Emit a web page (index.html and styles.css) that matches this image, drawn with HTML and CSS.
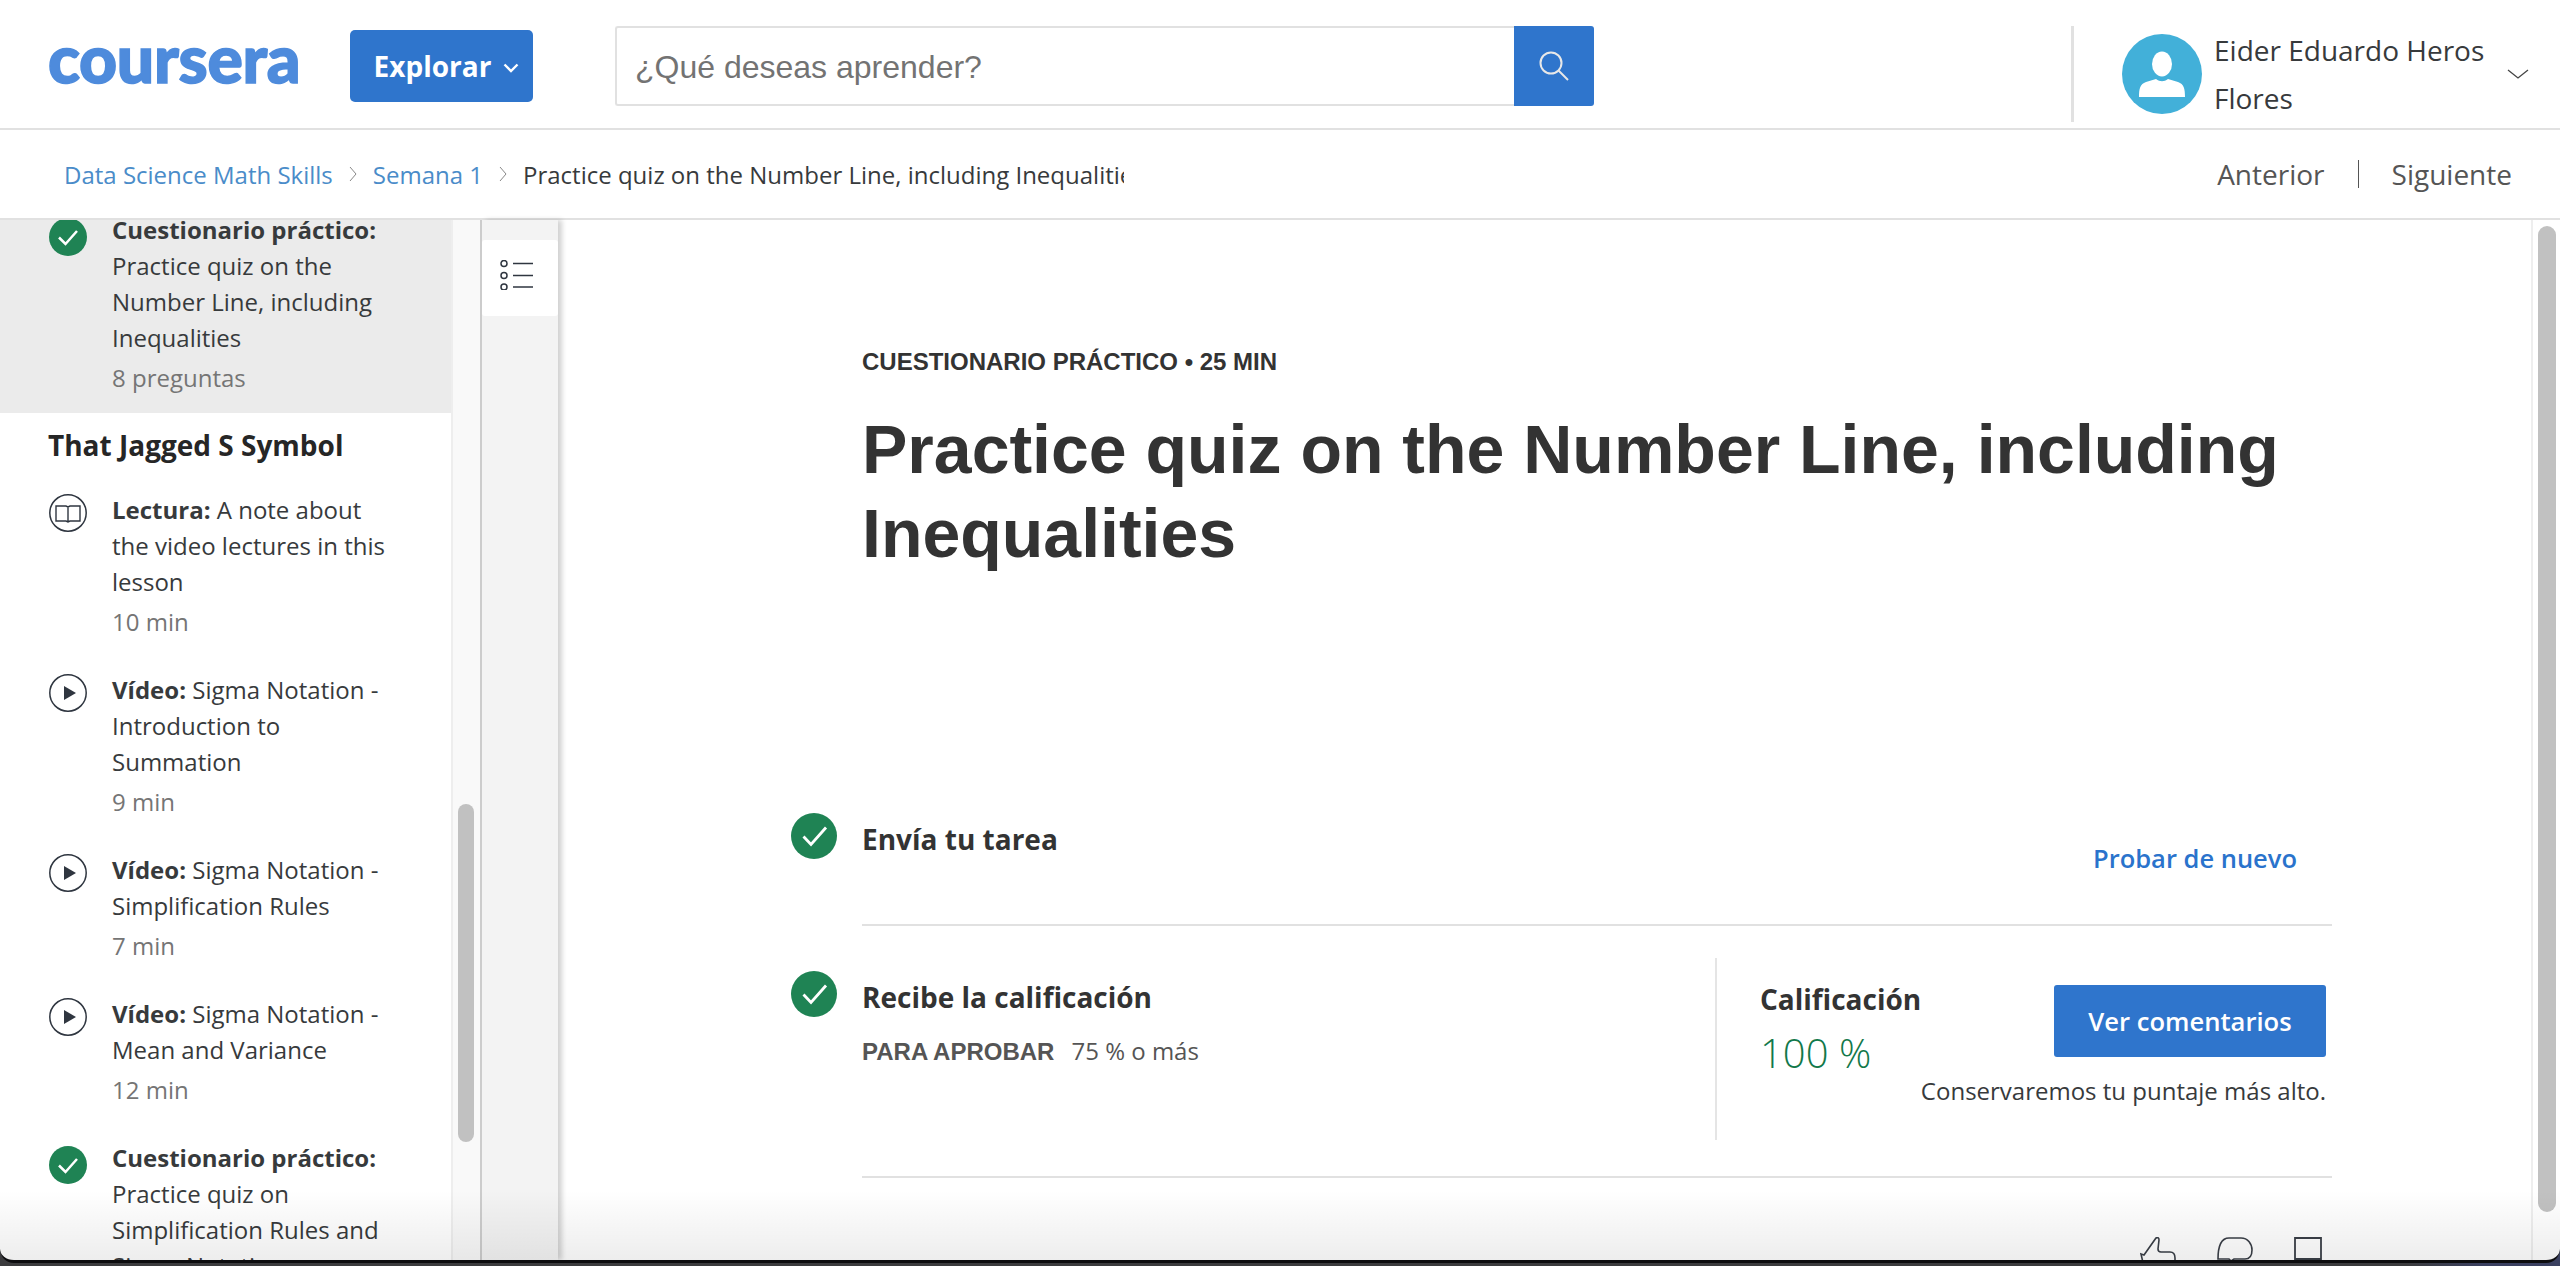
FILE: index.html
```html
<!DOCTYPE html>
<html lang="es">
<head>
  <meta charset="UTF-8">
  <title>Practice quiz on the Number Line, including Inequalities | Coursera</title>
  <link rel="stylesheet" href="styles.css">
</head>
<body>
  <div class="window">
    <header class="topbar">
      <span class="logo">coursera</span>
      <button class="explore-btn">Explorar
        <svg class="explore-chevron" viewBox="0 0 16 10"><path d="M1.500 1.500 8 8l6.500-6.500" fill="none" stroke="#fff" stroke-width="2.400"/></svg>
      </button>
      <div class="search">
        <div class="search-input">¿Qué deseas aprender?</div>
        <div class="search-btn">
          <svg viewBox="0 0 32 32" width="32" height="32"><circle cx="13" cy="13" r="10.500" fill="none" stroke="#e8e8e8" stroke-width="2"/><path d="M20.500 20.500 30 30" stroke="#e8e8e8" stroke-width="2"/></svg>
        </div>
      </div>
      <div class="user">
        <div class="avatar">
          <svg viewBox="0 0 80 80" width="80" height="80"><ellipse cx="40" cy="30" rx="10" ry="12.500" fill="#fff"/><path d="M17 63c0-8 1-13 7-15l10-3c4 3 8 3 12 0l10 3c6 2 7 7 7 15z" fill="#fff"/></svg>
        </div>
        <div class="user-name">Eider Eduardo Heros Flores</div>
        <svg class="user-chevron" viewBox="0 0 22 10" width="22" height="10"><path d="M1 1l10 8 10-8" fill="none" stroke="#444" stroke-width="1.300"/></svg>
      </div>
    </header>

    <nav class="crumbbar">
      <div class="crumbs">
        <a class="crumb-link">Data Science Math Skills</a>
        <svg class="crumb-sep" viewBox="0 0 8 16" width="8" height="16"><path d="M1 1l6 7-6 7" fill="none" stroke="#888" stroke-width="1"/></svg>
        <a class="crumb-link">Semana 1</a>
        <svg class="crumb-sep" viewBox="0 0 8 16" width="8" height="16"><path d="M1 1l6 7-6 7" fill="none" stroke="#888" stroke-width="1"/></svg>
        <span class="crumb-current">Practice quiz on the Number Line, including Inequalities</span>
      </div>
      <div class="pager">
        <span>Anterior</span>
        <i class="pager-sep"></i>
        <span>Siguiente</span>
      </div>
    </nav>

    <div class="workspace">
      <aside class="sidebar">
        <div class="lesson-list">
          <div class="item item-active">
            <svg class="item-icon icon-done" viewBox="0 0 38 38"><circle cx="19" cy="19" r="19" fill="#1f8354"/><path d="M10 19.500l6.500 6.500L28 13" fill="none" stroke="#fff" stroke-width="2.500"/></svg>
            <div class="item-text">
              <p><b>Cuestionario práctico:</b> Practice quiz on the Number Line, including Inequalities</p>
              <p class="meta">8 preguntas</p>
            </div>
          </div>

          <h3 class="lesson-title">That Jagged S Symbol</h3>

          <div class="item">
            <svg class="item-icon" viewBox="0 0 38 38"><circle cx="19" cy="19" r="18.200" fill="none" stroke="#2f3640" stroke-width="1.500"/><path d="M7 12h10l2 1 2-1h10v15H21l-2 1-2-1H7zM19 13v15" fill="none" stroke="#2f3640" stroke-width="1.400"/></svg>
            <div class="item-text">
              <p><b>Lectura:</b> A note about the video lectures in this lesson</p>
              <p class="meta">10 min</p>
            </div>
          </div>
          <div class="item">
            <svg class="item-icon" viewBox="0 0 38 38"><circle cx="19" cy="19" r="18.200" fill="none" stroke="#2f3640" stroke-width="1.500"/><path d="M15 12v14l12-7z" fill="#2f3640"/></svg>
            <div class="item-text">
              <p><b>Vídeo:</b> Sigma Notation - Introduction to Summation</p>
              <p class="meta">9 min</p>
            </div>
          </div>
          <div class="item">
            <svg class="item-icon" viewBox="0 0 38 38"><circle cx="19" cy="19" r="18.200" fill="none" stroke="#2f3640" stroke-width="1.500"/><path d="M15 12v14l12-7z" fill="#2f3640"/></svg>
            <div class="item-text">
              <p><b>Vídeo:</b> Sigma Notation - Simplification Rules</p>
              <p class="meta">7 min</p>
            </div>
          </div>
          <div class="item">
            <svg class="item-icon" viewBox="0 0 38 38"><circle cx="19" cy="19" r="18.200" fill="none" stroke="#2f3640" stroke-width="1.500"/><path d="M15 12v14l12-7z" fill="#2f3640"/></svg>
            <div class="item-text">
              <p><b>Vídeo:</b> Sigma Notation - Mean and Variance</p>
              <p class="meta">12 min</p>
            </div>
          </div>
          <div class="item">
            <svg class="item-icon icon-done" viewBox="0 0 38 38"><circle cx="19" cy="19" r="19" fill="#1f8354"/><path d="M10 19.500l6.500 6.500L28 13" fill="none" stroke="#fff" stroke-width="2.500"/></svg>
            <div class="item-text">
              <p><b>Cuestionario práctico:</b> Practice quiz on Simplification Rules and Sigma Notation</p>
            </div>
          </div>
        </div>
      </aside>

      <div class="side-track"><div class="side-thumb"></div></div>

      <div class="side-toggle">
        <div class="toggle-tab">
          <svg viewBox="0 0 33 30" width="33" height="30"><g fill="none" stroke="#2f3640" stroke-width="1.500"><circle cx="4" cy="3.500" r="3"/><circle cx="4" cy="15.500" r="3"/><circle cx="4" cy="27" r="3"/><path d="M13 3.500h20M13 15.500h20M13 27h20"/></g></svg>
        </div>
      </div>

      <main class="content">
        <div class="content-inner">
          <div class="eyebrow">CUESTIONARIO PRÁCTICO • 25 MIN</div>
          <h1 class="quiz-title">Practice quiz on the Number Line, including Inequalities</h1>

          <section class="step step-submit">
            <svg class="step-icon" viewBox="0 0 46 46"><circle cx="23" cy="23" r="23" fill="#1f8354"/><path d="M12.500 23.500l7.500 8L35 14.500" fill="none" stroke="#fff" stroke-width="2.800"/></svg>
            <div class="step-body">
              <h4 class="step-title">Envía tu tarea</h4>
              <a class="retry-link">Probar de nuevo</a>
            </div>
          </section>

          <section class="step step-grade">
            <svg class="step-icon" viewBox="0 0 46 46"><circle cx="23" cy="23" r="23" fill="#1f8354"/><path d="M12.500 23.500l7.500 8L35 14.500" fill="none" stroke="#fff" stroke-width="2.800"/></svg>
            <div class="step-body">
              <div class="grade-info">
                <h4 class="step-title">Recibe la calificación</h4>
                <p class="pass-line"><b>PARA APROBAR</b><span>75 % o más</span></p>
              </div>
              <div class="grade-result">
                <div class="grade-top">
                  <div>
                    <h4 class="step-title">Calificación</h4>
                    <div class="grade-score">100 %</div>
                  </div>
                  <button class="feedback-btn">Ver comentarios</button>
                </div>
                <p class="grade-note">Conservaremos tu puntaje más alto.</p>
              </div>
            </div>
          </section>

          <div class="actions">
            <svg viewBox="0 0 36 30" width="36" height="30"><path d="M1 17l3 1L16 1c2-1 3 0 3 2l-1 9c0 2 1 3 3 3h9c3 0 5 2 5 6v9H4z" fill="none" stroke="#3a3f47" stroke-width="1.600"/></svg>
            <svg viewBox="0 0 36 30" width="36" height="30"><path d="M12 1h12c7 0 11 6 11 12 0 5-2 9-7 9H17l-3 2-2-2H1C1 10 4 1 12 1z" fill="none" stroke="#3a3f47" stroke-width="1.600"/></svg>
            <svg viewBox="0 0 28 30" width="28" height="30"><path d="M1 30V1h26v21H1" fill="none" stroke="#3a3f47" stroke-width="1.800"/></svg>
          </div>
        </div>
      </main>

      <div class="main-track"><div class="main-thumb"></div></div>
    </div>

    <div class="bottom-fade"></div>
  </div>
</body>
</html>
```

FILE: styles.css
```css
* {
  box-sizing: border-box;
}

body {
  margin: 0;
  height: 1266px;
  overflow: hidden;
  background: linear-gradient(90deg, #3b3b3d 0%, #3b3b3d 94%, #3a4060 97%, #3a4060 100%);
  font-family: "Open Sans", sans-serif;
  color: #373a3c;
}

p, h1, h3, h4 {
  margin: 0;
}

.window {
  position: relative;
  height: 1263px;
  background: #fff;
  border-bottom: 3px solid #0c0c0e;
  border-radius: 0 0 14px 14px;
  overflow: hidden;
  display: flex;
  flex-direction: column;
}

/* top bar */
.topbar {
  height: 130px;
  flex: none;
  display: flex;
  align-items: flex-start;
  border-bottom: 2px solid #e1e1e1;
  padding-left: 48px;
}

.logo {
  width: 256px;
  margin-top: 20px;
  font-family: Lato, sans-serif;
  font-weight: 900;
  font-size: 66px;
  line-height: 76px;
  letter-spacing: -0.300px;
  -webkit-text-stroke: 1.500px #4e8bdc;
  color: #4e8bdc;
}

.explore-btn {
  width: 183px;
  height: 72px;
  margin: 30px 0 0 46px;
  padding: 0 0 0 10px;
  background: #2f75cc;
  color: #fff;
  border: none;
  border-radius: 5px;
  font-family: "Open Sans", sans-serif;
  font-weight: 700;
  font-size: 28px;
  display: flex;
  align-items: center;
  justify-content: center;
  gap: 12px;
}

.explore-chevron {
  width: 16px;
  height: 10px;
  margin-top: 4px;
}

.search {
  display: flex;
  margin: 26px 0 0 82px;
  height: 80px;
  width: 979px;
}

.search-input {
  flex: 1;
  border: 2px solid #e1e1e1;
  border-right: none;
  border-radius: 3px 0 0 3px;
  padding-left: 18px;
  line-height: 78px;
  font-family: "Liberation Sans", sans-serif;
  font-size: 32px;
  color: #737373;
}

.search-btn {
  width: 80px;
  background: #2f75cc;
  border-radius: 0 3px 3px 0;
  display: flex;
  align-items: center;
  justify-content: center;
}

.user {
  width: 488px;
  height: 96px;
  margin: 26px 0 0 477px;
  border-left: 3px solid #e1e1e1;
  display: flex;
  align-items: center;
  flex: none;
}

.avatar {
  width: 80px;
  height: 80px;
  margin-left: 48px;
  border-radius: 50%;
  background: #42b0d9;
  flex: none;
}

.user-name {
  width: 285px;
  margin-left: 12px;
  font-size: 28px;
  line-height: 48px;
}

.user-chevron {
  margin-left: 8px;
}

/* breadcrumb row */
.crumbbar {
  height: 90px;
  flex: none;
  display: flex;
  justify-content: space-between;
  align-items: center;
  border-bottom: 2px solid #e1e1e1;
  padding: 0 48px 0 64px;
}

.crumbs {
  width: 1060px;
  display: flex;
  align-items: center;
  gap: 16px;
  font-size: 24px;
  white-space: nowrap;
  overflow: hidden;
}

.crumb-link {
  color: #4a8cc9;
}

.crumb-sep {
  flex: none;
}

.crumb-current {
  color: #373a3c;
}

.pager {
  display: flex;
  align-items: center;
  gap: 33px;
  font-size: 28px;
  color: #555;
}

.pager-sep {
  width: 1px;
  height: 28px;
  background: #555;
}

/* body of the player */
.workspace {
  flex: 1;
  min-height: 0;
  display: flex;
}

.sidebar {
  width: 451px;
  flex: none;
  overflow: hidden;
}

.lesson-list {
  margin-top: -24px;
}

.item {
  display: flex;
  gap: 25px;
  padding: 16px 0 16px 49px;
  font-size: 24px;
  line-height: 36px;
}

.item-active {
  padding-bottom: 17px;
  background: #ebebeb;
}

.item-icon {
  width: 38px;
  height: 38px;
  flex: none;
  margin-top: 2px;
}

.icon-done {
  margin-top: 6px;
}

.item-text {
  width: 281px;
}

.meta {
  margin-top: 4px;
  color: #757575;
}

.lesson-title {
  margin: 12px 0 11px 48px;
  font-size: 28px;
  line-height: 40px;
  font-weight: 700;
  color: #262626;
}

.side-track {
  position: relative;
  width: 31px;
  flex: none;
  background: #f9f9f9;
  border-left: 2px solid #eee;
  border-right: 2px solid #ccc;
}

.side-thumb {
  position: absolute;
  left: 5px;
  top: 584px;
  width: 16px;
  height: 338px;
  border-radius: 8px;
  background: #c1c1c1;
}

.side-toggle {
  width: 76px;
  flex: none;
  padding-top: 20px;
  background: #f3f3f3;
  box-shadow: 4px 0 5px rgba(0, 0, 0, 0.18);
}

.toggle-tab {
  height: 76px;
  background: #fff;
  border-radius: 3px;
  display: flex;
  align-items: center;
  justify-content: center;
  padding: 0 8px 6px 0;
}

.content {
  flex: 1;
  overflow: hidden;
}

.content-inner {
  width: 1541px;
  margin-left: 233px;
  padding-top: 128px;
}

.eyebrow {
  margin-left: 71px;
  font-family: "Liberation Sans", sans-serif;
  font-weight: 700;
  font-size: 24px;
  line-height: 28px;
  color: #333;
}

.quiz-title {
  margin: 31px 0 0 71px;
  width: 1440px;
  font-family: "Liberation Sans", sans-serif;
  font-weight: 700;
  font-size: 68px;
  line-height: 84px;
  color: #333;
}

.step {
  display: flex;
  gap: 25px;
}

.step-icon {
  width: 46px;
  height: 46px;
  flex: none;
}

.step-body {
  flex: 1;
  display: flex;
  justify-content: space-between;
  border-bottom: 2px solid #e1e1e1;
}

.step-submit {
  margin-top: 238px;
}

.step-submit .step-body {
  height: 113px;
}

.step-title {
  font-size: 28px;
  line-height: 36px;
  font-weight: 700;
  color: #333;
}

.step-submit .step-title,
.grade-info .step-title {
  margin-top: 8px;
}

.retry-link {
  margin: 27px 35px 0 0;
  font-size: 25.500px;
  line-height: 36px;
  font-weight: 600;
  color: #2a73cc;
}

.step-grade {
  margin-top: 45px;
}

.step-grade .step-body {
  height: 207px;
  padding-bottom: 36px;
}

.pass-line {
  margin-top: 18px;
  font-size: 24px;
  line-height: 36px;
  color: #555;
}

.pass-line b {
  margin-right: 17px;
  font-family: "Liberation Sans", sans-serif;
}

.grade-info {
  flex: 1;
}

.grade-result {
  width: 617px;
  border-left: 2px solid #e5e5e5;
  margin-top: -13px;
  padding: 23px 6px 0 43px;
}

.grade-top {
  display: flex;
  justify-content: space-between;
}

.grade-score {
  margin-top: 10px;
  font-size: 40px;
  line-height: 52px;
  font-weight: 300;
  color: #12784a;
}

.feedback-btn {
  width: 272px;
  height: 72px;
  margin-top: 4px;
  background: #2f75cc;
  color: #fff;
  border: none;
  border-radius: 3px;
  font-family: "Open Sans", sans-serif;
  font-size: 25.600px;
  font-weight: 600;
}

.grade-note {
  margin-top: -6px;
  text-align: right;
  font-size: 24px;
  line-height: 36px;
}

.actions {
  display: flex;
  justify-content: flex-end;
  align-items: flex-start;
  gap: 41px;
  margin: 59px 10px 0 0;
}

.main-track {
  position: relative;
  width: 29px;
  flex: none;
  border-left: 2px solid #eee;
}

.main-thumb {
  position: absolute;
  left: 5px;
  top: 6px;
  width: 18px;
  height: 986px;
  border-radius: 9px;
  background: #c1c1c1;
}

/* soft shade the OS dock throws over the bottom of the window */
.bottom-fade {
  position: absolute;
  left: 0;
  right: 0;
  bottom: 0;
  height: 70px;
  background: linear-gradient(rgba(0, 0, 0, 0), rgba(0, 0, 0, 0.07));
  pointer-events: none;
}
```
